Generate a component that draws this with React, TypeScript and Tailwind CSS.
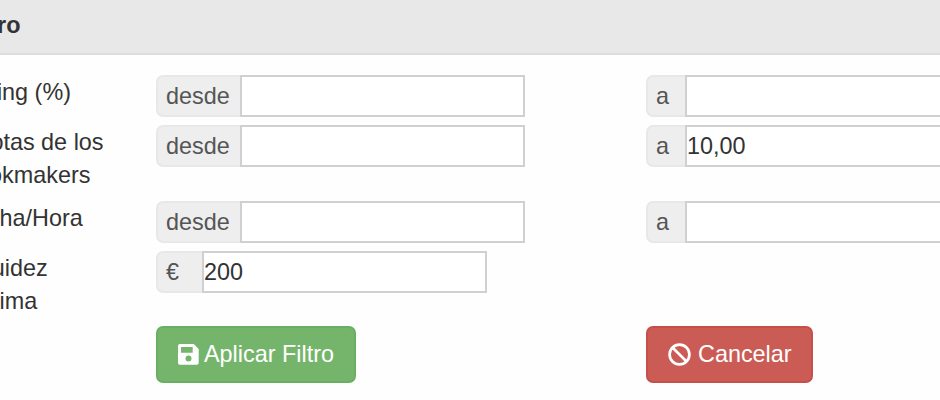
import React from "react";

type FieldProps = {
  addon: string;
  addonClass: string;
  inputClass?: string;
  value?: string;
};

function Field({ addon, addonClass, inputClass = "w-[285px]", value = "" }: FieldProps) {
  return (
    <div className="flex h-[42px]">
      <span
        className={`flex shrink-0 items-center rounded-l-[7px] border-2 border-r-0 border-[#e8e8e8] bg-[#eeeeee] pl-2 pt-[2px] text-[#555555] ${addonClass}`}
      >
        {addon}
      </span>
      <input
        aria-label={addon}
        defaultValue={value}
        className={`block h-[42px] shrink-0 border-2 border-[#d0d0d0] bg-white pt-px text-[#333333] outline-none ${inputClass}`}
      />
    </div>
  );
}

function SaveIcon() {
  return (
    <svg width="21" height="21" viewBox="0 0 21 21" className="-mt-px shrink-0">
      <path
        fill="currentColor"
        fillRule="evenodd"
        d="M2 0H15.800L20.700 4.900V18.700Q20.700 20.700 18.700 20.700H2Q0 20.700 0 18.700V2Q0 0 2 0ZM3 3V8.700H14.700V3ZM10.500 11.600A3 3 0 1 0 10.500 17.600A3 3 0 1 0 10.500 11.600Z"
      />
    </svg>
  );
}

function BanIcon() {
  return (
    <svg width="23" height="23" viewBox="0 0 23 23" fill="none" stroke="currentColor" strokeWidth="2.7" className="-mt-px shrink-0">
      <circle cx="11.500" cy="11.500" r="9.900" />
      <path d="M4.500 4.500L18.500 18.500" />
    </svg>
  );
}

const labelClass = "w-[196px] shrink-0 whitespace-pre-line pt-px pl-[0.5px] leading-[33.4px]";

export default function App() {
  return (
    <div className="h-[400px] w-[940px] overflow-hidden bg-[#fefefe] font-['Liberation_Sans',Arial,sans-serif] text-[23.4px] text-[#333333]">
      <header className="flex h-[55px] items-center border-b-2 border-[#dddddd] bg-[#e8e8e8]">
        <h1 className="-ml-[38px] -mt-px font-bold">Filtro</h1>
      </header>
      <main className="-ml-10 flex w-[1040px] flex-col pt-5">
        <div className="flex h-[50px]">
          <div className={labelClass}>Rating (%)</div>
          <div className="w-[490px] shrink-0"><Field addon="desde" addonClass="w-[84px]" /></div>
          <Field addon="a" addonClass="w-[39px]" />
        </div>
        <div className="flex h-[76px]">
          <div className={labelClass}>{"Cuotas de los\nBookmakers"}</div>
          <div className="w-[490px] shrink-0"><Field addon="desde" addonClass="w-[84px]" /></div>
          <Field addon="a" addonClass="w-[39px]" value="10,00" />
        </div>
        <div className="flex h-[50px]">
          <div className={labelClass}>Fecha/Hora</div>
          <div className="w-[490px] shrink-0"><Field addon="desde" addonClass="w-[84px]" /></div>
          <Field addon="a" addonClass="w-[39px]" />
        </div>
        <div className="flex h-[75px]">
          <div className={labelClass}>{"Liquidez\nmínima"}</div>
          <Field addon="€" addonClass="w-[46px]" value="200" />
        </div>
        <div className="flex pl-[196px]">
          <div className="w-[490px] shrink-0">
            <button className="flex h-[57px] w-[200px] items-center gap-[5px] whitespace-nowrap rounded-[7px] border-2 border-[#69af63] bg-[#75b56b] pl-5 text-white">
              <SaveIcon />
              <span>Aplicar Filtro</span>
            </button>
          </div>
          <button className="flex h-[57px] w-[167px] items-center gap-[7px] whitespace-nowrap rounded-[7px] border-2 border-[#c64f4a] bg-[#ca5c55] pl-5 text-white">
            <BanIcon />
            <span>Cancelar</span>
          </button>
        </div>
      </main>
    </div>
  );
}
